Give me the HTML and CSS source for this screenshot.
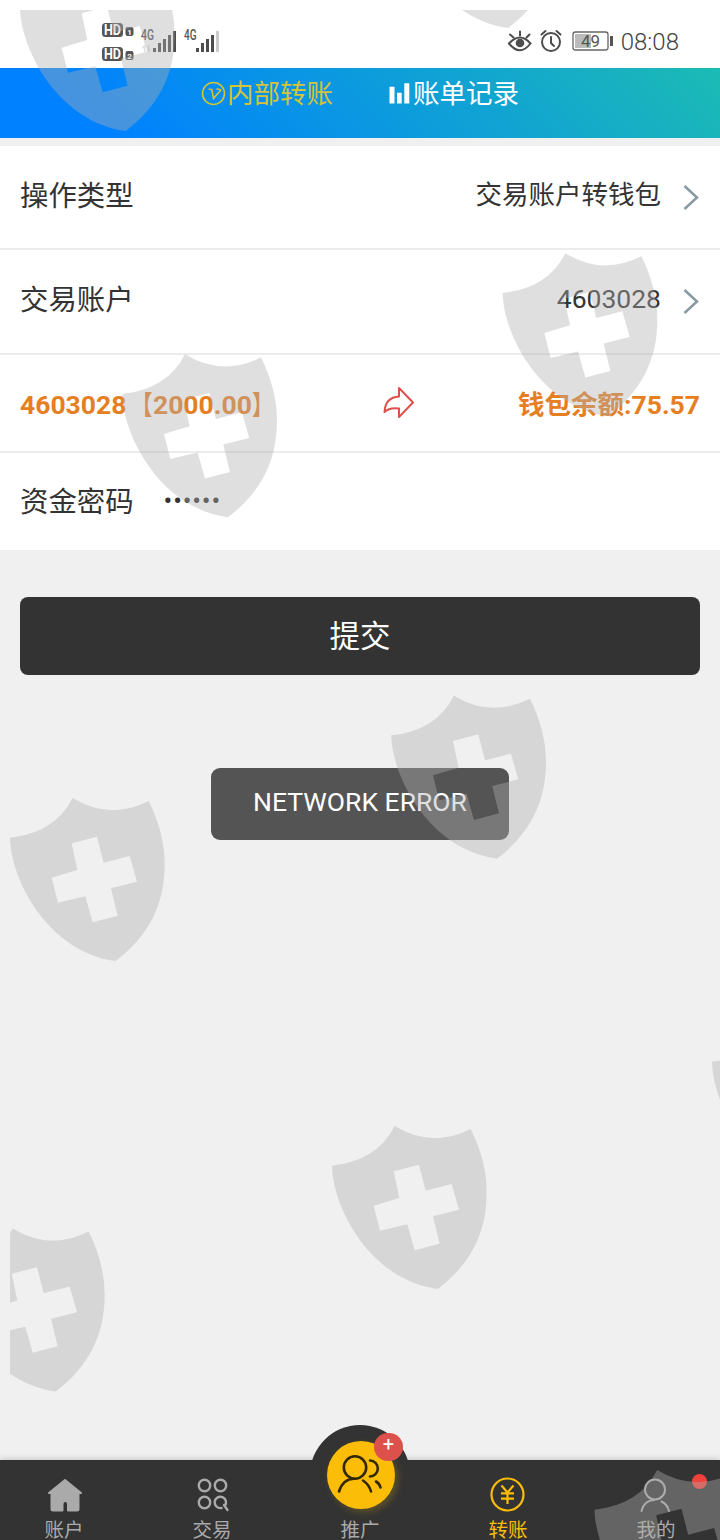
FILE: index.html
```html
<!DOCTYPE html>
<html lang="zh-CN">
<head>
<meta charset="utf-8">
<title>内部转账</title>
<link rel="stylesheet" href="styles.css">
</head>
<body>
<div class="screen">
  <div class="status">
    <svg class="status-left" width="130" height="44" viewBox="100 20 130 44">
      <rect x="102" y="23" width="21" height="14" rx="3.5" fill="#555"/>
      <text class="hd" x="104" y="35" textLength="17" lengthAdjust="spacingAndGlyphs">HD</text>
      <rect x="125.500" y="27" width="8" height="9" rx="2" fill="#555"/>
      <text class="sim" x="127.200" y="34.500">1</text>
      <rect x="102" y="47" width="21" height="14" rx="3.500" fill="#555"/>
      <text class="hd" x="104" y="59" textLength="17" lengthAdjust="spacingAndGlyphs">HD</text>
      <rect x="125.500" y="51" width="8" height="9" rx="2" fill="#555"/>
      <text class="sim" x="127.200" y="58.500">2</text>
      <text class="net" x="141" y="40" textLength="13" lengthAdjust="spacingAndGlyphs">4G</text>
      <path d="M144.500 52v-6l-2 2M148.500 45v6l2-2" fill="none" stroke="#ddd" stroke-width="1.500"/>
      <path d="M154.500 52v-4M159.500 52v-9M164.500 52v-13M169.500 52v-17M174.500 52V31" class="bars"/>
      <text class="net" x="184" y="40" textLength="12.500" lengthAdjust="spacingAndGlyphs">4G</text>
      <path d="M197.500 52v-4M202.500 52v-9M207.500 52v-13M212.500 52v-17" class="bars"/>
      <path d="M217.500 52V31" class="bars bars-off"/>
    </svg>
    <div class="status-right">
      <svg width="108" height="28" viewBox="507 28 108 28">
        <g fill="none" stroke="#4d4d4d" stroke-width="2" stroke-linecap="round">
          <path d="M509 43.500q11-12 21.500 0q-10.500 13.500-21.500 0z"/>
          <path d="M520 35.500v-4M513.500 37.500l-3.500-3M526.500 37.500l3-3"/>
          <circle cx="551" cy="42" r="9"/>
          <path d="M551 37v6l3 3"/>
          <path d="M541.500 34.500l4-3.500M556.500 31l4 3.500"/>
        </g>
        <circle cx="520" cy="43" r="4.300" fill="#4d4d4d"/>
        <rect x="573" y="32" width="35" height="18" rx="2.500" fill="#fff" stroke="#666" stroke-width="1.300"/>
        <rect x="575" y="34" width="16" height="14" fill="#bbb"/>
        <rect x="610" y="36" width="3" height="10" fill="#555"/>
        <text class="battery" x="581" y="47" textLength="19" lengthAdjust="spacingAndGlyphs">49</text>
      </svg>
      <span class="clock">08:08</span>
    </div>
  </div>

  <div class="header">
    <div class="head-tab head-tab-on">
      <svg width="26" height="26" viewBox="0 0 26 26" fill="none" stroke="currentColor" stroke-width="1.600">
        <circle cx="12.500" cy="12.500" r="11"/>
        <path d="M7.500 8.300l3.300.2 1.700 9 7-8M15.500 7.800l5 1.200"/>
      </svg>
      <span>内部转账</span>
    </div>
    <div class="head-tab">
      <svg width="24" height="26" viewBox="0 0 24 26" fill="currentColor">
        <path d="M.5 5.700h5v16.800h-5zM8 11.700h4.700v10.800H8zM15.300 2.300h5v20.200h-5z"/>
      </svg>
      <span>账单记录</span>
    </div>
  </div>

  <div class="form">
    <div class="row row-type">
      <span class="label">操作类型</span>
      <span class="value">交易账户转钱包</span>
      <svg class="chevron" width="16" height="28" viewBox="0 0 16 28"><path d="M1.500 3L14 14.500 1.500 26"/></svg>
    </div>
    <div class="row row-account">
      <span class="label">交易账户</span>
      <span class="value">4603028</span>
      <svg class="chevron" width="16" height="28" viewBox="0 0 16 28"><path d="M1.500 3L14 14.500 1.500 26"/></svg>
    </div>
    <div class="row row-balance">
      <span class="from">4603028<span class="open">【</span>2000.00<span class="close">】</span></span>
      <svg class="share" width="32" height="34" viewBox="0 0 32 34">
        <path d="M16 2l14 14.500L16 31v-8.500C9 21.500 5 22.500 1.500 26C2 16.500 7 11 16 10.500z"/>
      </svg>
      <span class="to">钱包余额:75.57</span>
    </div>
    <div class="row row-last">
      <span class="label">资金密码</span>
      <span class="dots">••••••</span>
    </div>
  </div>

  <div class="submit">提交</div>
  <div class="toast">NETWORK ERROR</div>

  <div class="tabbar">
    <div class="hump"></div>
    <div class="tabs">
      <div class="tab">
        <svg class="home" width="36" height="36" viewBox="0 0 36 36" fill="#aaa" stroke="#aaa" stroke-width="2" stroke-linejoin="round">
          <path d="M18 3L34 16h-2.500v16q0 1.500-1.500 1.500h-9V27q0-3-2.700-3T15.500 27v6.500H6q-1.500 0-1.500-1.500V16H2z"/>
        </svg>
        <span>账户</span>
      </div>
      <div class="tab">
        <svg width="36" height="36" viewBox="0 0 36 36" fill="none" stroke="#aaa" stroke-width="2.400" stroke-linecap="round">
          <circle cx="10.500" cy="8.500" r="5.700"/><circle cx="26.500" cy="8.500" r="5.700"/><circle cx="10.500" cy="25.500" r="5.700"/>
          <path d="M27.500 31a5.700 5.700 0 1 1 3.300-2M30 28l3.500 5"/>
        </svg>
        <span>交易</span>
      </div>
      <div class="tab">
        <div class="promo">
          <svg width="68" height="68" viewBox="0 0 68 68" fill="none" stroke="#332700" stroke-width="2.600" stroke-linecap="round">
            <circle cx="28" cy="26.500" r="11.200"/>
            <path d="M12 50.500q4-12.500 15-12.700M36 39.500q6 4 8 11"/>
            <path d="M43 19.500a7.800 8 0 1 1 0 16M49 40.500q3.500 2 4.500 6"/>
          </svg>
          <span class="plus">+</span>
        </div>
        <span>推广</span>
      </div>
      <div class="tab tab-on">
        <svg width="36" height="36" viewBox="0 0 36 36" fill="none" stroke="currentColor" stroke-width="2.200">
          <circle cx="17.500" cy="17.500" r="16"/>
          <path d="M11.500 8.500l6 7 6-7M17.500 15.500V27M11 16.300h13M11 21.700h13"/>
        </svg>
        <span>转账</span>
      </div>
      <div class="tab">
        <div class="me">
          <svg width="36" height="36" viewBox="0 0 36 36" fill="none" stroke="#aaa" stroke-width="2" stroke-linecap="round">
            <circle cx="18" cy="12.500" r="10"/>
            <path d="M4.500 34Q7 23.500 17 23M24.500 24.500q6 3 7.500 9.500"/>
          </svg>
          <i class="reddot"></i>
        </div>
        <span>我的</span>
      </div>
    </div>
  </div>

  <svg class="shields" width="720" height="1540" viewBox="0 0 720 1540">
    <defs>
      <path id="shield" fill-rule="evenodd" transform="scale(.3333)" d="M0 119Q135 105 188 0Q300 68 416 9Q464 105 464 200C464 320 415 415 317 489C115 462 2 245 0 119zM185 136L202 216L125 239L144 314L226 295L248 373L323 353L303 271L381 251L359 174L281 194L261 116z"/>
      <clipPath id="area"><path d="M10 10H720V1540H10z"/></clipPath>
    </defs>
    <g fill="#afafaf" fill-opacity=".4" clip-path="url(#area)">
      <use href="#shield" x="20" y="-32"/>
      <use href="#shield" x="402.500" y="-135"/>
      <use href="#shield" x="502.700" y="253.300"/>
      <use href="#shield" x="122.300" y="354.300"/>
      <use href="#shield" x="391.300" y="695.700"/>
      <use href="#shield" x="10" y="798"/>
      <use href="#shield" x="712" y="1022"/>
      <use href="#shield" x="332" y="1126"/>
      <use href="#shield" x="-50" y="1228.500"/>
      <use href="#shield" x="594.500" y="1470"/>
    </g>
  </svg>
</div>
</body>
</html>
```
FILE: styles.css
```css
* { box-sizing: border-box; }
body {
  margin: 0;
  background: #f0f0f0;
  font-family: Roboto, "Noto Sans CJK SC", sans-serif;
  color: #333;
}
.screen {
  position: relative;
  width: 720px;
  height: 1540px;
  overflow: hidden;
  display: flex;
  flex-direction: column;
}
svg { display: block; flex: none; }

.status {
  height: 68px;
  flex: none;
  background: #fff;
  display: flex;
  justify-content: space-between;
  align-items: flex-start;
  padding: 20px 41px 0 100px;
}
.status-right {
  display: flex;
  align-items: center;
  gap: 6px;
  padding-top: 8px;
}
.clock {
  font-size: 24px;
  font-weight: 300;
  line-height: 28px;
  color: #444;
}
.hd { font: bold 14px Roboto, sans-serif; fill: #fff; }
.sim { font: bold 8px Roboto, sans-serif; fill: #fff; }
.net { font: 500 14px Roboto, sans-serif; fill: #555; }
.battery { font: 17px Roboto, sans-serif; fill: #555; }
.bars { fill: none; stroke: #4d4d4d; stroke-width: 3; }
.bars-off { stroke: #ccc; }

.header {
  height: 70px;
  flex: none;
  background: linear-gradient(45deg, #0081ff 15%, #1cbbb4);
  display: flex;
  justify-content: center;
  gap: 56px;
  padding-top: 6px;
  color: #fff;
  font-size: 26.500px;
}
.head-tab {
  display: flex;
  align-items: center;
  height: 40px;
  line-height: 40px;
}
.head-tab-on { color: #d4c436; }

.form { margin-top: 8px; background: #fff; flex: none; }
.row {
  display: flex;
  align-items: center;
  padding: 0 20px;
  border-bottom: 2px solid #ececec;
}
.row-type { height: 104px; padding-bottom: 8px; }
.row-account { height: 105px; padding-bottom: 8px; }
.row-type .value { margin-bottom: 2px; }
.row-account .value { margin-top: 1px; }
.row-balance {
  height: 98px;
  justify-content: space-between;
  padding-bottom: 1px;
  font-size: 26.500px;
  font-weight: bold;
  color: #e67e22;
}
.row-last { height: 97px; padding-bottom: 5px; border-bottom: 0; }
.label { font-size: 28.400px; }
.value { margin-left: auto; font-size: 26.500px; }
.chevron {
  margin: 7px 1px 0 22px;
  fill: none;
  stroke: #8799a3;
  stroke-width: 2.500;
}
.share {
  margin-left: 77px;
  fill: none;
  stroke: #dd514c;
  stroke-width: 2;
  stroke-linejoin: round;
}
.from { width: 250px; white-space: nowrap; }
.open, .close { display: inline-block; transform: scaleX(0.8); }
.open { transform-origin: right; }
.close { transform-origin: left; }
.to { width: 250px; text-align: right; }
.dots { margin: 4px 0 0 30px; font-size: 26px; letter-spacing: 0.8px; }

.submit {
  margin: 47px 20px 0;
  height: 78px;
  flex: none;
  border-radius: 8px;
  background: #333;
  color: #fff;
  font-size: 30.500px;
  line-height: 80px;
  text-align: center;
}
.toast {
  margin: 93px auto 0;
  width: 298px;
  height: 72px;
  flex: none;
  border-radius: 9px;
  background: #545454;
  color: #fff;
  font-size: 26.500px;
  line-height: 68px;
  text-align: center;
}

.tabbar {
  position: relative;
  margin-top: auto;
  height: 80px;
  flex: none;
  background: #333;
  box-shadow: 0 -1px 6px rgba(0, 0, 0, 0.18);
}
.hump {
  position: absolute;
  left: 310px;
  top: -35px;
  width: 100px;
  height: 100px;
  border-radius: 50%;
  background: #333;
}
.tabs { display: flex; margin: 0 -10px; }
.tab {
  position: relative;
  width: 148px;
  height: 80px;
  padding-top: 17px;
  display: flex;
  flex-direction: column;
  align-items: center;
  gap: 8px;
  font-size: 19.500px;
  line-height: 19px;
  color: #aaa;
}
.tab-on { color: #fbbd08; }
.home { margin-left: 2px; }
.promo {
  position: relative;
  width: 68px;
  height: 68px;
  margin: -36px 0 4px 2px;
  border-radius: 50%;
  background: #fbbd08;
  box-shadow: 3px 3px 7px rgba(251, 189, 8, 0.22);
  flex: none;
}
.plus {
  position: absolute;
  left: 47px;
  top: -8px;
  width: 29px;
  height: 28px;
  border-radius: 14px;
  background: #dd514c;
  color: #fff;
  font-size: 20px;
  line-height: 22px;
  text-align: center;
}
.me { position: relative; margin-right: 2px; }
.reddot {
  position: absolute;
  left: 55px;
  top: -3px;
  width: 15px;
  height: 15px;
  border-radius: 50%;
  background: #f0413a;
}
.shields { position: absolute; left: 0; top: 0; pointer-events: none; }
```
